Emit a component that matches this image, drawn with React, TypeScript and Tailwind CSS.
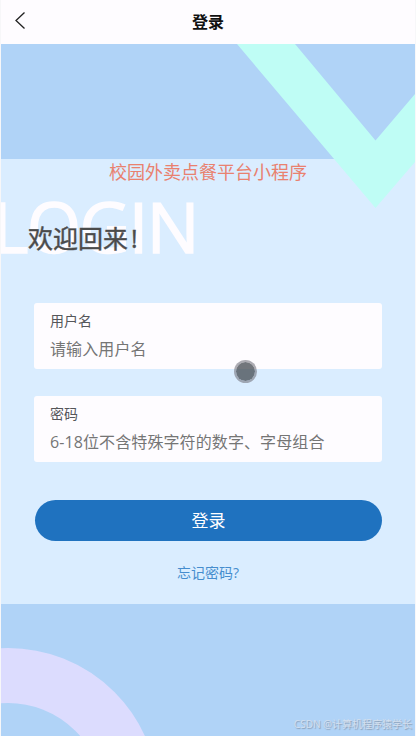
import React from 'react';

interface FieldProps {
  id: string;
  label: string;
  placeholder: string;
  type?: string;
}

const Field: React.FC<FieldProps> = ({ id, label, placeholder, type = 'text' }) => {
  return (
    <div className="h-[66px] rounded-[3px] bg-[#fefcff] px-4 pt-2">
      <label htmlFor={id} className="block text-sm leading-5 text-[#55565a]">
        {label}
      </label>
      <input
        id={id}
        type={type}
        placeholder={placeholder}
        className="mt-1.5 block h-6 w-full bg-transparent text-base leading-6 tracking-[0.1px] text-[#55565a] outline-none placeholder:text-[#757575]"
      />
    </div>
  );
};

const Backdrop: React.FC = () => {
  return (
    <svg className="absolute inset-0" width="414" height="692" viewBox="1 44 414 692" fill="none">
      {/* Ring in the bottom corner */}
      <circle cx="8" cy="798.5" r="123" stroke="#dcdcfe" strokeWidth="55" />
    </svg>
  );
};

const Chevron: React.FC = () => {
  return (
    <svg className="absolute inset-0 pointer-events-none" width="414" height="692" viewBox="1 44 414 692">
      <path d="M237 44H295L375.5 140.5L415 94V162L375.5 208Z" fill="#bffdf5" />
    </svg>
  );
};

const App: React.FC = () => {
  return (
    <div className="h-[736px] w-[416px] overflow-hidden bg-[#f7f7f9] px-px font-['Open_Sans','Noto_Sans_CJK_SC',sans-serif]">
      <header className="grid h-11 grid-cols-3 items-center bg-[#fefcff]">
        <button aria-label="返回" className="ml-[13px] -mt-0.5 justify-self-start">
          <svg width="13" height="20" viewBox="0 0 13 20" fill="none" stroke="#222" strokeWidth="1.3">
            <path d="M10.5 1.5L2 9.5L10.5 17.5" />
          </svg>
        </button>
        <h1 className="text-center text-base font-bold leading-6 text-[#111]">登录</h1>
      </header>

      <main className="relative h-[692px] overflow-hidden bg-[#b0d3f7] pt-[115px]">
        <Backdrop />
        <section className="relative h-[445px] bg-[#daedff]">
          <p className="pt-px text-center text-lg leading-6 text-[#e9816f]">校园外卖点餐平台小程序</p>

          <div className="relative h-[119px]">
            <div className="absolute -left-[9px] top-[-5px] text-[70px] leading-[95px] tracking-[-1.7px] text-[#fefcff] [-webkit-text-stroke:1.5px_#fefcff]">
              LOGIN
            </div>
            <h2 className="relative pl-[27px] pt-[36px] text-[25px] leading-9 text-[#4b4b4b] [-webkit-text-stroke:0.4px_#4b4b4b]">
              欢迎回来<span className="pl-[3px]">!</span>
            </h2>
          </div>

          <form className="flex flex-col gap-[27px] pl-[33px] pr-[33px]">
            <Field id="username" label="用户名" placeholder="请输入用户名" />
            <Field id="password" label="密码" placeholder="6-18位不含特殊字符的数字、字母组合" type="password" />
            <button
              type="button"
              className="ml-px mt-[11px] h-[41px] rounded-full bg-[#1f72bf] pt-px text-[17px] leading-6 text-white"
            >
              登录
            </button>
          </form>
          <div className="mt-[22px] text-center text-sm leading-5 text-[#468dce]">忘记密码?</div>
        </section>
        <Chevron />

        {/* Touch pointer */}
        <div className="absolute left-[233px] top-[316px] size-[23px] rounded-full border-2 border-[#777780]/60 bg-[#434a50]/75 bg-clip-padding" />

        <div className="absolute bottom-[4px] right-[3px] whitespace-nowrap text-[10px] leading-4 text-[#d3dfee] [text-shadow:1px_1px_1px_#8a9db3]">
          CSDN @计算机程序猿学长
        </div>
      </main>
    </div>
  );
};

export default App;
